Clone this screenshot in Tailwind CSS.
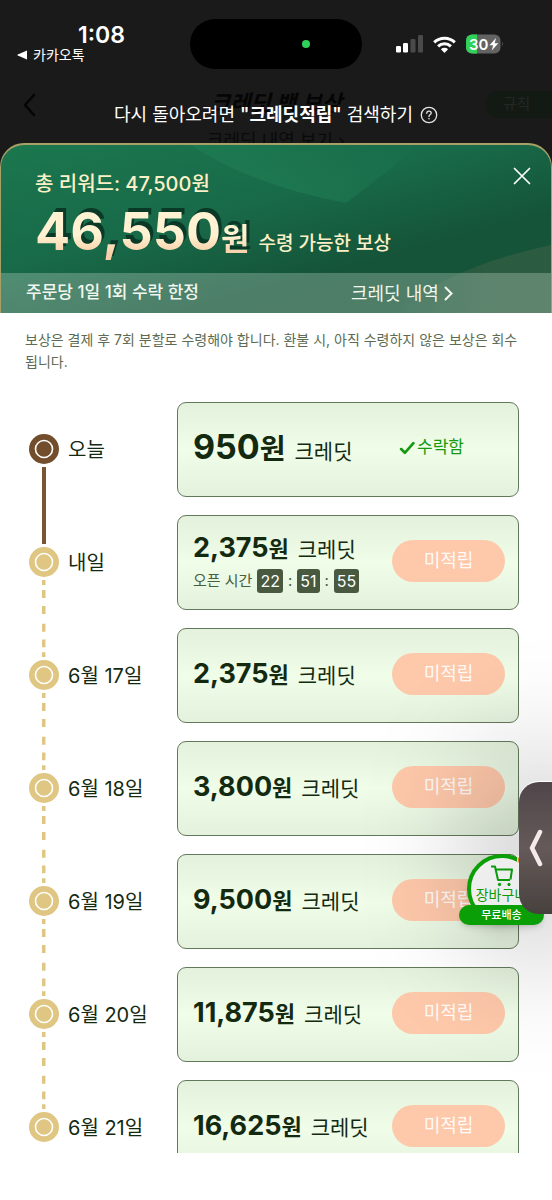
<!DOCTYPE html>
<html lang="ko">
<head>
<meta charset="utf-8">
<meta name="viewport" content="width=device-width, initial-scale=1">
<title>크레딧 백 보상</title>
<script src="https://cdn.jsdelivr.net/npm/@tailwindcss/browser@4"></script>
</head>
<body class="relative flex h-screen flex-col overflow-hidden bg-white font-['Inter','Noto_Sans_CJK_KR',sans-serif] text-[#142a10]">

<svg class="hidden" aria-hidden="true">
  <symbol id="dashes" viewBox="0 0 4 39"><path d="M0 0h3.500v5H0zM0 10h3.500v8H0zM0 26h3.500v8H0z" fill="#dfc683"/></symbol>
  <symbol id="node" viewBox="0 0 30 30"><circle cx="15" cy="15" r="15" fill="currentColor"/><circle cx="15" cy="15" r="8.500" fill="none" stroke="#fff" stroke-width="1.600"/></symbol>
</svg>

<!-- Dimmed page behind the sheet, with the status bar -->
<header class="relative h-[167px] shrink-0 bg-[#1a1a1a] text-white">
  <div class="grid grid-cols-[1fr_172px_1fr] pt-[19px]">
    <div class="flex flex-col pl-[17px]">
      <time class="pl-[61px] text-[23px] leading-8 font-semibold">1:08</time>
      <a href="#" class="-mt-1 flex items-center gap-[5px] text-[14px] leading-4"><svg class="h-[10px] w-[11px]" viewBox="0 0 11 10" fill="#fff"><path d="M10 .5v9L.8 5.6Q-.2 5 .8 4.4z"/></svg>카카오톡</a>
    </div>
    <div class="flex h-[50px] items-center justify-end rounded-full bg-black pr-[52px]"><span class="size-2 rounded-full bg-[#30d158]"></span></div>
    <div class="flex h-[50px] items-center gap-[10px] pl-[33px]">
      <svg class="h-[18px] w-[28px]" viewBox="0 0 28 18"><g fill="#fff"><rect x="1" y="11" width="5" height="6.500" rx="1.300"/><rect x="8" y="8" width="5" height="9.500" rx="1.300"/></g><g fill="#4a4a4a"><rect x="15.500" y="4" width="5" height="13.500" rx="1.300"/><rect x="23" y="0" width="5" height="17.500" rx="1.300"/></g></svg>
      <svg class="h-[17px] w-[23px]" viewBox="0 0 23 17" fill="none" stroke="#fff" stroke-width="3"><path d="M1.200 6.300a15 15 0 0 1 20.600 0"/><path d="M5.100 10.300a9.300 9.300 0 0 1 12.800 0"/><path d="M11.500 17l-3.600-3.700a5.200 5.200 0 0 1 7.200 0z" fill="#fff" stroke="none"/></svg>
      <svg class="h-[20px] w-[38px]" viewBox="0 0 38 20"><defs><clipPath id="bat"><rect width="34.500" height="19" y=".5" rx="6"/></clipPath></defs><g clip-path="url(#bat)"><rect width="35" height="20" fill="#636363"/><rect width="11" height="20" fill="#30d158"/></g><path d="M36 7.500q1.600 2.500 0 5z" fill="#636363"/><text x="3" y="15.500" font-size="15" font-weight="600" fill="#fff">30</text><path d="M30 4l-6.500 7.300h3.600l-1.300 5.200 6.500-7.300h-3.600z" fill="#fff"/></svg>
    </div>
  </div>
  <div class="mt-5 grid grid-cols-[1fr_auto_1fr] items-start text-[#050505]">
    <button class="ml-[22px] mt-[2px] w-5" aria-label="뒤로"><svg class="h-7 w-4" viewBox="0 0 16 28" fill="none" stroke="#050505" stroke-width="2.600" stroke-linecap="round" stroke-linejoin="round"><path d="M12 4L3 14l9 10"/></svg></button>
    <div class="text-center">
      <h1 class="text-[22px] leading-7 font-bold italic">크레딧 백 보상</h1>
      <p class="mt-3 text-[18px] leading-6 text-[#0a0a0a]">크레딧 내역 보기 ›</p>
    </div>
    <button class="mt-[2px] h-[27px] w-[67px] justify-self-end rounded-l-full bg-[#131a14] pr-1 text-[15px] text-[#232823]">규칙</button>
  </div>
  <p class="absolute inset-x-0 top-[102px] flex items-center justify-center gap-[7px] text-[18px] leading-[26px] text-white">
    <span>다시 돌아오려면 <strong class="font-semibold">"크레딧적립"</strong> 검색하기</span>
    <svg class="size-[18px]" viewBox="0 0 18 18" fill="none" stroke="#e5e5e5" stroke-width="1.300"><circle cx="9" cy="9" r="7.700"/><path d="M6.800 7.300q0-2.100 2.200-2.100t2.200 1.900q0 1-1.200 1.700-1 .6-1 1.600" stroke-linecap="round"/><circle cx="9" cy="12.700" r=".5" fill="#e5e5e5" stroke-width=".5"/></svg>
  </p>
</header>

<main class="relative -mt-6 flex min-h-0 flex-1 flex-col">
  <section class="relative shrink-0 overflow-hidden rounded-t-[24px] border-x border-t-2 border-[#a8a066] bg-linear-[165deg,#1b774e_0%,#186a49_40%,#155439_68%,#175439_100%] text-[#fcf0c6]">
    <svg class="absolute inset-0 h-full w-full" viewBox="0 0 550 168" preserveAspectRatio="none" aria-hidden="true">
      <defs>
        <linearGradient id="ray" x1="0" y1="1" x2="1" y2="0"><stop offset="0" stop-color="#27925f" stop-opacity=".45"/><stop offset="1" stop-color="#27925f" stop-opacity="0"/></linearGradient>
        <linearGradient id="hill" x1="0" x2="1"><stop offset="0" stop-color="#3c6247" stop-opacity="0"/><stop offset=".6" stop-color="#3a6145" stop-opacity=".6"/></linearGradient>
      </defs>
      <path d="M190 0Q250 40 345 58L420 0z" fill="url(#ray)"/>
      <path d="M390 168Q455 120 550 100V168z" fill="url(#hill)"/>
    </svg>
    <div class="relative flex h-[128px] flex-col pl-[34px] pt-[25px]">
      <p class="text-[20px] leading-7 font-medium">총 리워드: 47,500원</p>
      <p class="flex items-baseline leading-[67px]">
        <strong class="bg-linear-to-b from-[#fff2d2] from-50% to-[#f8cfa8] to-75% bg-clip-text text-[52px] font-bold text-transparent drop-shadow-[3px_-4px_0_#0a3a27]">46,550<span class="text-[31px]">원</span></strong>
        <span class="ml-[9px] text-[19px] font-medium">수령 가능한 보상</span>
      </p>
      <button class="absolute right-[20px] top-[22px]" aria-label="닫기"><svg class="size-[18px]" viewBox="0 0 18 18" stroke="#fff" stroke-width="1.700" stroke-linecap="round"><path d="M1.500 1.500l15 15M16.500 1.500l-15 15"/></svg></button>
    </div>
    <div class="relative grid h-10 grid-cols-[325px_1fr] items-center bg-[#cfe0d6]/30 pl-[25px] text-[17px] text-[#f1f7ee]">
      <p class="font-medium">주문당 1일 1회 수락 한정</p>
      <a href="#" class="flex items-center gap-[5px] text-[18px]">크레딧 내역<svg class="h-[15px] w-[9px]" viewBox="0 0 9 15" fill="none" stroke="#f4f8f2" stroke-width="2" stroke-linecap="round"><path d="M1.500 1.500l6 6-6 6"/></svg></a>
    </div>
  </section>
  <p class="shrink-0 px-[25px] pt-[16px] text-[14px] leading-[22px] text-[#5c6b52]">보상은 결제 후 7회 분할로 수령해야 합니다. 환불 시, 아직 수령하지 않은 보상은 회수됩니다.</p>

  <ol class="mt-5 min-h-0 flex-1 overflow-hidden pl-[29px] pr-[33px]" id="days">
  </ol>
  <footer class="h-[47px] shrink-0"></footer>
</main>

<template id="row">
  <li class="grid h-[113px] grid-cols-[30px_118px_1fr] items-center">
    <div class="flex flex-col items-center gap-[3px]">
      <div data-top class="h-[38px] w-[4px]"><svg class="hidden h-[38px] w-[4px] -scale-y-100"><use href="#dashes"/></svg></div>
      <svg data-node class="size-[30px] text-[#dfc683]"><use href="#node"/></svg>
      <div data-bottom class="h-[39px] w-[4px]"><svg class="h-[39px] w-[4px]"><use href="#dashes"/></svg></div>
    </div>
    <time data-date class="pl-[9px] text-[20px] leading-6"></time>
    <article class="flex h-[95px] items-center justify-between rounded-[9px] border border-[#63795b] bg-linear-to-b from-[#e4f1dc] via-[#effde9] to-[#e4f1dd] pl-[15px] pr-[13px]">
      <div>
        <p class="leading-8"><strong data-amount class="text-[27px] font-bold"></strong><strong data-won class="text-[22px] font-bold">원</strong><span class="ml-[9px] text-[21px]">크레딧</span></p>
        <p data-timer class="mt-[2px] hidden items-center gap-[5px] text-[15px] leading-6 text-[#46603e]">오픈 시간
          <span class="rounded-[3px] bg-[#48593f] px-[3px] text-[16px] text-white">22</span><span>:</span>
          <span class="rounded-[3px] bg-[#48593f] px-[3px] text-[16px] text-white">51</span><span>:</span>
          <span class="rounded-[3px] bg-[#48593f] px-[3px] text-[16px] text-white">55</span>
        </p>
      </div>
      <span data-done class="mb-[4px] mr-[41px] hidden items-center gap-[2px] text-[17px] text-[#169a12]"><svg class="h-[14px] w-[16px]" viewBox="0 0 15 13" fill="none" stroke="#169a12" stroke-width="2.500" stroke-linecap="round" stroke-linejoin="round"><path d="M2 7.500l3.500 3.500L13.500 2"/></svg>수락함</span>
      <button data-wait class="mb-[4px] h-[42px] w-[113px] rounded-full bg-[#fec8aa] text-[18px] text-white/90">미적립</button>
    </article>
  </li>
</template>

<!-- Soft shade of the side handle, then the floating cart and the handle itself -->
<div class="absolute right-0 top-[781px] h-[132px] w-[33px] rounded-l-[20px] shadow-[0_10px_120px_40px_rgba(0,0,0,0.22)]"></div>
<a href="#" class="absolute right-[8px] top-[854px] flex h-[72px] w-[85px] flex-col items-center text-[#0b9a0b]">
  <span class="flex size-[70px] flex-col items-center rounded-full border-4 border-[#0a9e07] bg-[#eeeeee] pt-[7px] shadow-lg">
    <svg class="h-[22px] w-[24px] shrink-0" viewBox="0 0 24 22" fill="none" stroke="#0b9a0b" stroke-width="2" stroke-linejoin="round"><path d="M1 1.500h4l3 13.500h12M6 4.500h16l-1.500 10"/><circle cx="9.500" cy="19.500" r="1.200" fill="#0b9a0b" stroke-width="1"/><circle cx="19" cy="19.500" r="1.200" fill="#0b9a0b" stroke-width="1"/></svg>
    <span class="text-[14px] leading-[16px] whitespace-nowrap">장바구니</span>
  </span>
  <span class="absolute right-[11px] top-[-2px] size-4 rounded-full border border-white bg-[#e27012]"></span>
  <span class="absolute inset-x-0 bottom-[1px] rounded-[10px] bg-[#0a9e07] text-center text-[11px] leading-[20px] font-medium text-white shadow-md">무료배송</span>
</a>
<button class="absolute right-0 top-[782px] flex h-[132px] w-[33px] items-center justify-center rounded-l-[20px] bg-linear-to-b from-[#50464a] via-[#655a59] to-[#47413e]" aria-label="패널 열기">
  <svg class="h-[38px] w-[14px]" viewBox="0 0 14 38" fill="none" stroke="#f6e9ea" stroke-width="4.500" stroke-linecap="round" stroke-linejoin="round"><path d="M11 3L3 19l8 16"/></svg>
</button>

<script>
const rows = [["오늘","950"],["내일","2,375"],["6월 17일","2,375"],["6월 18일","3,800"],["6월 19일","9,500"],["6월 20일","11,875"],["6월 21일","16,625"]];
const list = document.getElementById("days"), tpl = document.getElementById("row");
rows.forEach(([date, amount], i) => {
  const r = tpl.content.cloneNode(true), q = s => r.querySelector(s);
  q("[data-date]").textContent = date;
  q("[data-amount]").textContent = amount;
  if (i === 0) {
    q("[data-node]").classList.replace("text-[#dfc683]", "text-[#734e2c]");
    q("[data-amount]").classList.replace("text-[27px]", "text-[34px]");
    q("[data-won]").classList.replace("text-[22px]", "text-[28px]");
    q("[data-bottom]").innerHTML = ""; q("[data-bottom]").classList.add("bg-[#7a5534]");
    q("[data-wait]").remove();
    q("[data-done]").classList.replace("hidden", "flex");
  } else if (i === 1) {
    q("[data-top]").classList.add("bg-[#7a5534]");
    q("[data-timer]").classList.replace("hidden", "flex");
  } else {
    q("[data-top] svg").classList.remove("hidden");
  }
  if (i === rows.length - 1) q("[data-bottom]").innerHTML = "";
  list.append(r);
});
</script>
</body>
</html>
